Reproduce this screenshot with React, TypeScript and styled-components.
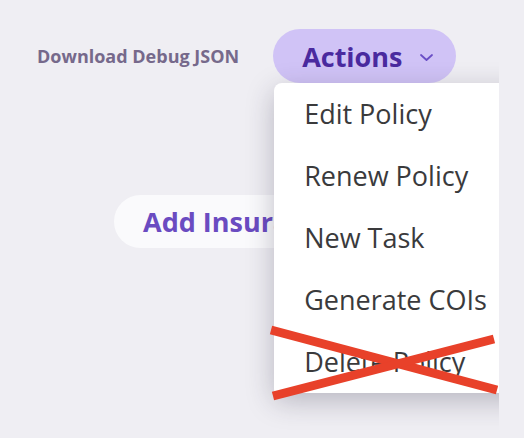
import React from "react";
import styled, { createGlobalStyle } from "styled-components";

const GlobalStyle = createGlobalStyle`
  html, body {
    margin: 0;
    padding: 0;
    background: #efeef3;
    font-family: "Open Sans", "Liberation Sans", sans-serif;
  }
`;

const menuItems = [
  "Edit Policy",
  "Renew Policy",
  "New Task",
  "Generate COIs",
  "Delete Policy",
];

function App() {
  return (
    <>
      <GlobalStyle />
      <Frame>
        <Header>
          <DebugLink>Download Debug JSON</DebugLink>
          <ActionsWrap>
            <ActionsButton>
              Actions
              <svg width="13" height="7" viewBox="0 0 13 7" fill="none">
                <path
                  d="M1 1l5.5 5L12 1"
                  stroke="#6a4ec6"
                  strokeWidth="1.8"
                  strokeLinecap="round"
                  strokeLinejoin="round"
                />
              </svg>
            </ActionsButton>
            <Menu>
              {menuItems.map((item) => (
                <MenuItem key={item}>{item}</MenuItem>
              ))}
            </Menu>
          </ActionsWrap>
        </Header>
        <Body>
          <AddButton>Add Insurance</AddButton>
        </Body>
        <CrossOut viewBox="0 0 499 438" width="499" height="438">
          <line x1="271" y1="330" x2="497" y2="390" />
          <line x1="273" y1="396" x2="494" y2="339" />
        </CrossOut>
      </Frame>
    </>
  );
}

const Frame = styled.div`
  position: relative;
  width: 499px;
  height: 438px;
  overflow: hidden;
`;

const Header = styled.div`
  display: flex;
  align-items: center;
  gap: 34px;
  padding: 29px 0 0 37px;
`;

const DebugLink = styled.span`
  font-size: 18px;
  font-weight: 700;
  color: #76698b;
`;

const ActionsWrap = styled.div`
  position: relative;
  z-index: 2;
`;

const ActionsButton = styled.button`
  display: flex;
  align-items: center;
  gap: 17px;
  height: 54px;
  padding: 0 23px 0 29px;
  border: none;
  border-radius: 27px;
  background: #d0c3f6;
  color: #4a2a9f;
  font-family: inherit;
  font-size: 27px;
  font-weight: 700;
  cursor: pointer;

  svg {
    margin-top: 2px;
  }
`;

const Menu = styled.ul`
  position: absolute;
  top: 100%;
  left: 1px;
  width: 280px;
  margin: 0;
  padding: 0;
  list-style: none;
  background: #fff;
  border-radius: 8px 0 0 4px;
  box-shadow: 0 8px 28px rgba(40, 36, 60, 0.28);
`;

const MenuItem = styled.li`
  height: 62px;
  line-height: 62px;
  padding-left: 30px;
  font-size: 27px;
  color: #3a3a3c;
  white-space: nowrap;
`;

const Body = styled.div`
  padding: 112px 0 0 114px;
`;

const AddButton = styled.button`
  height: 53px;
  padding: 0 28px 0 29px;
  border: none;
  border-radius: 27px;
  background: #fafafc;
  color: #6a4bc1;
  font-family: inherit;
  font-size: 27px;
  font-weight: 700;
  white-space: nowrap;
`;

const CrossOut = styled.svg`
  position: absolute;
  top: 0;
  left: 0;
  z-index: 3;
  pointer-events: none;

  line {
    stroke: #e8412a;
    stroke-width: 9;
  }
`;

export default App;
